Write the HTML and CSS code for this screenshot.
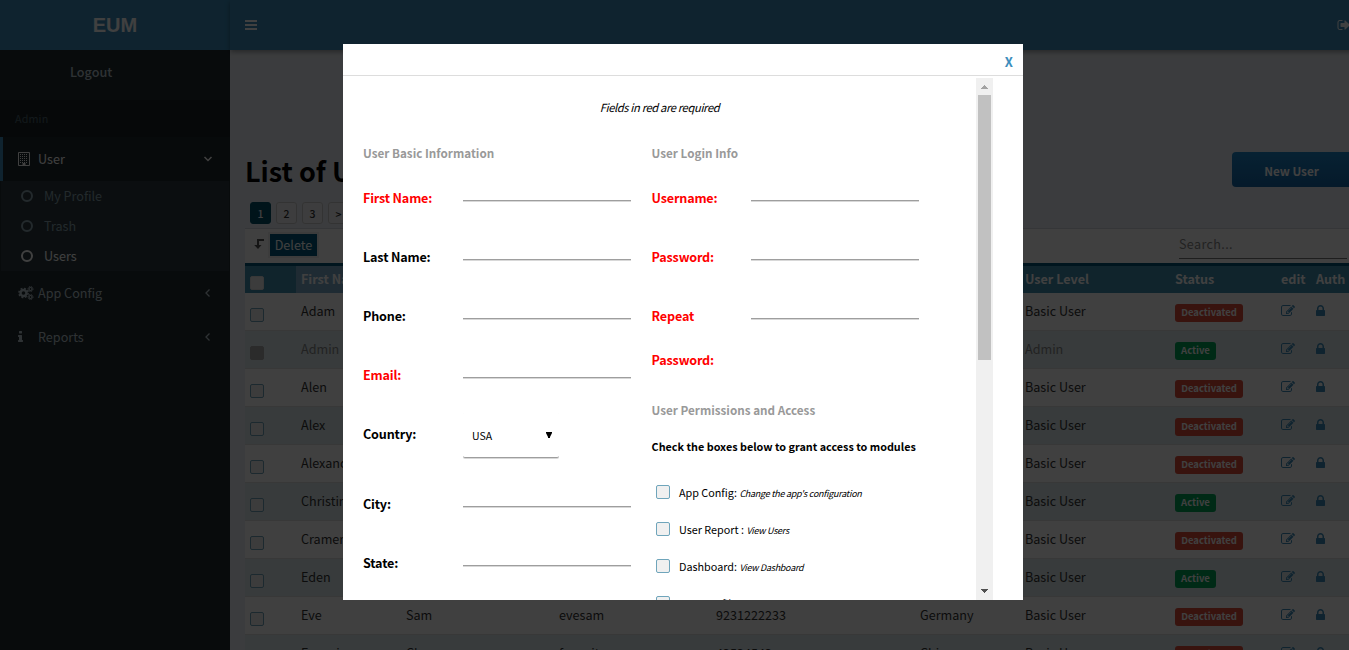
FILE: index.html
```html
<!DOCTYPE html>
<html lang="en">
<head>
<meta charset="utf-8">
<title>EUM</title>
<link rel="stylesheet" href="styles.css">
</head>
<body>
<svg class="defs" aria-hidden="true">
  <symbol id="lock" viewBox="0 0 1152 1792"><path d="M320 768h512v-192q0-106-75-181t-181-75-181 75-75 181v192zm832 96v576q0 40-28 68t-68 28h-960q-40 0-68-28t-28-68v-576q0-40 28-68t68-28h32v-192q0-184 132-316t316-132 316 132 132 316v192h32q40 0 68 28t28 68z"/></symbol>
  <symbol id="edit" viewBox="0 0 1792 1792"><path d="M888 1184l116-116-152-152-116 116v56h96v96h56zm440-720q-16-16-33 1l-350 350q-17 17-1 33t33-1l350-350q17-17 1-33zm80 594v190q0 119-84.500 203.500t-203.500 84.500h-832q-119 0-203.500-84.500t-84.500-203.500v-832q0-119 84.500-203.500t203.500-84.500h832q63 0 117 25 15 7 18 23 3 17-9 29l-49 49q-14 14-32 8-23-6-45-6h-832q-66 0-113 47t-47 113v832q0 66 47 113t113 47h832q66 0 113-47t47-113v-126q0-13 9-22l64-64q15-15 35-7t20 29zm-96-738l288 288-672 672h-288v-288zm444 132l-92 92-288-288 92-92q28-28 68-28t68 28l152 152q28 28 28 68t-28 68z"/></symbol>
</svg>
<div class="app">
  <aside class="sidebar">
    <div class="logo">EUM</div>
    <div class="user-panel">Logout</div>
    <div class="menu-title">Admin</div>
    <div class="menu-item active">
      <svg class="mi" viewBox="0 0 14 14"><path d="M1.500 .5h11v13h-11z" fill="none" stroke="currentColor"/><path d="M3 2.500h8M3 4.500h8M3 6.500h8M3 8.500h8M3 10.500h8" stroke="currentColor" stroke-dasharray="1 1"/><path d="M5.500 11h3v3h-3z"/></svg>
      <span>User</span>
      <svg class="arrow" viewBox="0 0 10 10"><path d="M1.500 3l3.500 3.500L8.500 3" fill="none" stroke="currentColor" stroke-width="1.500"/></svg>
    </div>
    <div class="tree">
      <div class="leaf"><i class="ring"></i>My Profile</div>
      <div class="leaf"><i class="ring"></i>Trash</div>
      <div class="leaf on"><i class="ring"></i>Users</div>
    </div>
    <div class="menu-item">
      <svg class="mi cogs" viewBox="0 0 16 14"><g fill="none" stroke="currentColor"><circle cx="5.500" cy="7" r="3" stroke-width="2.400"/><circle cx="5.500" cy="7" r="4.600" stroke-width="1.500" stroke-dasharray="1.900 1.713"/><circle cx="12.500" cy="3" r="1.500" stroke-width="1.200"/><circle cx="12.500" cy="3" r="2.500" stroke-dasharray="1.200 .76"/><circle cx="12.500" cy="11" r="1.500" stroke-width="1.200"/><circle cx="12.500" cy="11" r="2.500" stroke-dasharray="1.200 .76"/></g></svg>
      <span>App Config</span>
      <svg class="arrow" viewBox="0 0 10 10"><path d="M6.500 1.500L3 5l3.500 3.500" fill="none" stroke="currentColor" stroke-width="1.300"/></svg>
    </div>
    <div class="menu-item">
      <svg class="mi info" viewBox="0 0 640 1792"><path d="M640 1344v128q0 26-19 45t-45 19h-512q-26 0-45-19t-19-45v-128q0-26 19-45t45-19h64v-384h-64q-26 0-45-19t-19-45v-128q0-26 19-45t45-19h384q26 0 45 19t19 45v576h64q26 0 45 19t19 45zm-128-1152v192q0 26-19 45t-45 19h-256q-26 0-45-19t-19-45v-192q0-26 19-45t45-19h256q26 0 45 19t19 45z"/></svg>
      <span>Reports</span>
      <svg class="arrow" viewBox="0 0 10 10"><path d="M6.500 1.500L3 5l3.500 3.500" fill="none" stroke="currentColor" stroke-width="1.300"/></svg>
    </div>
  </aside>
  <main class="main">
    <header class="navbar">
      <svg class="bars" viewBox="0 0 12 10"><path d="M0 0h12v2H0zM0 4h12v2H0zM0 8h12v2H0z"/></svg>
      <svg class="signout" viewBox="0 0 1792 1792"><path d="M704 1440q0 4 1 20t.5 26.500-3 23.500-10 19.500-20.500 6.500h-320q-119 0-203.500-84.500t-84.500-203.500v-704q0-119 84.500-203.500t203.500-84.500h320q13 0 22.500 9.500t9.500 22.500q0 4 1 20t.5 26.500-3 23.500-10 19.500-20.500 6.500h-320q-66 0-113 47t-47 113v704q0 66 47 113t113 47h312l11.500 1 11.500 3 8 5.500 7 9 2 13.500zm928-544q0 26-19 45l-544 544q-19 19-45 19t-45-19-19-45v-288h-448q-26 0-45-19t-19-45v-384q0-26 19-45t45-19h448v-288q0-26 19-45t45-19 45 19l544 544q19 19 19 45z"/></svg>
    </header>
    <div class="title-row"><h1>List of Users</h1><button class="new-user">New User</button></div>
    <div class="pages"><b class="cur">1</b><b>2</b><b>3</b><b>&gt;</b></div>
    <section class="box">
      <div class="tools">
        <svg class="level" viewBox="0 0 10 10"><path d="M10 0v2H5v4h2.500L4 10 .2 6H3V0z"/></svg>
        <button class="delete">Delete</button>
        <div class="search">Search...</div>
      </div>
      <div class="grid head"><span><i class="check"></i></span><span class="sorted">First Name</span><span></span><span></span><span></span><span></span><span>User Level</span><span>Status</span><span>edit</span><span>Auth</span></div>
      <div id="rows"></div>
    </section>
  </main>
</div>
<div class="overlay"></div>
<div class="modal">
  <div class="modal-head"><span>X</span></div>
  <div class="modal-body">
    <div class="form">
      <p class="note">Fields in red are required</p>
      <div class="cols">
        <div class="col">
          <h4>User Basic Information</h4>
          <div class="field"><label class="req">First Name:</label><i class="line"></i></div>
          <div class="field"><label>Last Name:</label><i class="line"></i></div>
          <div class="field"><label>Phone:</label><i class="line"></i></div>
          <div class="field"><label class="req">Email:</label><i class="line"></i></div>
          <div class="field country"><label>Country:</label><div class="select"><span>USA</span><svg viewBox="0 0 6 6"><path d="M0 0h6v1L4 5v1H2V5L0 1z"/></svg></div></div>
          <div class="field"><label>City:</label><i class="line"></i></div>
          <div class="field"><label>State:</label><i class="line"></i></div>
        </div>
        <div class="col right">
          <h4>User Login Info</h4>
          <div class="field"><label class="req">Username:</label><i class="line"></i></div>
          <div class="field"><label class="req">Password:</label><i class="line"></i></div>
          <div class="field repeat"><label class="req">Repeat Password:</label><i class="line"></i></div>
          <h4 class="h-perm">User Permissions and Access</h4>
          <p class="hint">Check the boxes below to grant access to modules</p>
          <div class="perm"><i class="check"></i><span>App Config: <em>Change the app's configuration</em></span></div>
          <div class="perm"><i class="check"></i><span>User Report : <em>View Users</em></span></div>
          <div class="perm"><i class="check"></i><span>Dashboard: <em>View Dashboard</em></span></div>
          <div class="perm"><i class="check"></i><span>User Profile: <em>Edit Profile</em></span></div>
        </div>
      </div>
    </div>
    <div class="scrollbar">
      <svg viewBox="0 0 17 17"><path d="M5 11h7v-1h-1V9h-1V8H9V7H8v1H7v1H6v1H5z" fill="#a3a3a3"/></svg>
      <div class="thumb"></div>
      <svg viewBox="0 0 17 17"><path d="M5 6h7v1h-1v1h-1v1H9v1H8V9H7V8H6V7H5z" fill="#505050"/></svg>
    </div>
  </div>
</div>
<script src="rows.js"></script>
</body>
</html>
```
FILE: rows.js
```js
const users = [
  ['Adam', '', '', '', '', 'Basic User', 0],
  ['Admin', '', '', '', '', 'Admin', 1],
  ['Alen', '', '', '', '', 'Basic User', 0],
  ['Alex', '', '', '', '', 'Basic User', 0],
  ['Alexander', '', '', '', '', 'Basic User', 0],
  ['Christine', '', '', '', '', 'Basic User', 1],
  ['Cramer', '', '', '', '', 'Basic User', 0],
  ['Eden', '', '', '', '', 'Basic User', 1],
  ['Eve', 'Sam', 'evesam', '9231222233', 'Germany', 'Basic User', 0],
  ['Ferrari', 'Cha', 'ferrarit', '42524542', 'China', 'Basic User', 0]
];
document.getElementById('rows').innerHTML = users.map(u => {
  const cells = u.slice(0, 6).map(t => `<span>${t}</span>`).join('');
  const status = u[6] ? '<b class="tag ok">Active</b>' : '<b class="tag">Deactivated</b>';
  return `<div class="grid row${u[5] === 'Admin' ? ' locked' : ''}"><span><i class="check"></i></span>${cells}<span>${status}</span>` +
    '<span><svg class="e"><use href="#edit"/></svg></span><span><svg class="l"><use href="#lock"/></svg></span></div>';
}).join('');
```
FILE: styles.css
```css
* { box-sizing: border-box; }
body { margin: 0; width: 1349px; height: 650px; overflow: hidden; position: relative; font: 12.6px/20px "Noto Sans CJK SC", "Noto Sans", sans-serif; color: #333; background: #ecf0f5; }
svg { display: block; fill: currentColor; flex: none; }
.defs { position: absolute; width: 0; height: 0; }
h1, h4, p { margin: 0; }
button { font: inherit; border: 0; padding: 0; }
.app { display: flex; height: 650px; overflow: hidden; }

.sidebar { width: 230px; flex: none; background: #222d32; color: #b8c7ce; }
.logo { height: 50px; background: #3c8dbc; color: #fff; font: bold 20px/50px "Liberation Sans", Arial, sans-serif; text-align: center; }
.user-panel { height: 50px; padding-left: 70px; line-height: 44px; font-weight: 500; }
.menu-title { height: 37px; padding-left: 15px; background: #1a2226; color: #4b646f; font-size: 10.8px; line-height: 36px; letter-spacing: .1px; }
.menu-item { height: 44px; display: flex; align-items: center; padding: 0 17px 0 18px; }
.menu-item.active { background: #1e282c; color: #fff; border-left: 3px solid #3c8dbc; padding-left: 14px; }
.mi { width: 14px; height: 14px; margin-right: 7px; }
.cogs { width: 16px; margin-right: 4px; }
.info { width: 5px; margin-right: 15px; }
.menu-item.active .mi { margin-right: 7px; }
.arrow { width: 10px; height: 10px; margin-left: auto; }
.tree { background: #2c3b41; height: 90px; padding-left: 20px; margin: 0 1px; }
.leaf { height: 30px; display: flex; align-items: center; color: #8aa4af; gap: 11px; }
.leaf.on { color: #fff; }
.ring { width: 12px; height: 12px; border: 2px solid; border-radius: 50%; }

.main { width: 1139px; flex: none; }
.navbar { height: 50px; display: flex; align-items: center; padding-left: 15px; background: #3c8dbc; color: #fff; box-shadow: 0 2px 5px rgba(0,0,0,.35); }
.bars { width: 12px; height: 10px; }
.signout { width: 14px; height: 14px; margin-left: 1080px; }
.title-row { margin: 102px 0 0 15px; height: 49px; display: flex; justify-content: space-between; }
h1 { font-size: 27px; line-height: 38px; color: #000; font-weight: 700; }
.new-user { width: 137px; height: 35px; border-radius: 4px; background: linear-gradient(#1e86c8, #1567a8); color: #fff; font-size: 11.700px; font-weight: 700; line-height: 37px; padding-right: 18px; }
.pages { display: flex; gap: 5px; margin-left: 20px; height: 27px; padding-top: 1px; }
.pages b { width: 21px; height: 22px; border: 1px solid #ccc; border-radius: 3px; background: #f2f4f6; font-size: 10.500px; line-height: 21px; font-weight: 500; text-align: center; color: #333; }
.pages .cur { background: #00506a; border-color: #00506a; color: #fff; }
.box { margin-left: 15px; background: #fff; border-top: 1px solid #d2d6de; }
.tools { height: 34px; display: flex; align-items: center; padding-left: 9px; }
.level { width: 10px; height: 10px; color: #555; margin-top: -5px; }
.delete { width: 47px; height: 22px; margin: -3px 0 0 6px; background: #005a80; color: #fff; line-height: 19px; box-shadow: 0 0 0 2px #eee; }
.search { margin-left: 862px; width: 168px; height: 25px; color: #888; border-bottom: 1px solid #777; letter-spacing: .35px; line-height: 20px; }
.grid { display: grid; grid-template-columns: 51px 105px 153px 157px 204px 105px 150px 106px 35px 50px; height: 38px; }
.grid > span { padding-left: 5px; white-space: nowrap; }
.head { height: 30px; background: #4090b0; color: #fff; border-top: 3px solid #005478; line-height: 25px; font-weight: 700; }
.sorted { background: #7caccc; }
.row { border-bottom: 1px solid #ddd; line-height: 36px; }
.row:nth-child(even) { background: #deebee; }
.locked { color: #888; }
.check { display: block; width: 14px; height: 14px; border: 1px solid #6fa5bb; border-radius: 2px; background: #f0f0f0; flex: none; }
.row .check { margin-top: 15px; }
.head .check { margin-top: 10px; border-color: #ddd; }
.locked .check { background: #aaa; border-color: #aaa; }
.tag { display: block; width: 68px; height: 18px; margin-top: 11px; border-radius: 3px; background: #dd4b39; color: #fff; font-size: 9.500px; line-height: 17px; text-align: center; }
.tag.ok { width: 41px; background: #00a65a; }
.e { width: 14px; height: 14px; margin-top: 11px; color: #3c8dbc; }
.l { width: 9px; height: 14px; margin-top: 11px; color: #3c8dbc; }

.overlay { position: absolute; inset: 0; background: rgba(0,0,0,.75); }
.modal { position: absolute; left: 343px; top: 44px; width: 680px; height: 556px; background: #fff; overflow: hidden; color: #000; }
.modal-head { height: 32px; border-bottom: 1px solid #ddd; text-align: right; padding-right: 10px; color: #3c8dbc; font-weight: 700; line-height: 35px; font-size: 13px; }
.modal-body { display: flex; height: 522px; margin-top: 2px; width: 650px; }
.form { width: 633px; padding: 0 0 0 20px; overflow: hidden; }
.note { text-align: center; width: 593px; font-size: 11.200px; letter-spacing: -.37px; font-style: italic; line-height: 20px; padding-top: 19px; height: 65px; }
.cols { display: flex; }
.col { width: 288.600px; flex: none; }
h4 { font-size: 11.700px; line-height: 20px; height: 33px; color: #999; font-weight: 700; }
.field { display: flex; align-items: flex-start; height: 59px; }
.field label { width: 100px; line-height: 44px; font-weight: 700; letter-spacing: -.18px; flex: none; }
.right .field label { width: 99.400px; }
.req { color: #f00; }
.line { width: 168px; height: 26px; border-bottom: 1px solid #9e9e9e; box-shadow: 0 1px 0 #d8d8d8; flex: none; margin-top: -1px; }
.country { height: 70px; }
.select { width: 96px; height: 46px; border-bottom: 1px solid #9e9e9e; box-shadow: 0 1px 0 #d8d8d8; border-radius: 2px; display: flex; justify-content: space-between; padding: 0 7px 0 9px; line-height: 47px; font-size: 10.500px; }
.select svg { width: 6px; height: 6px; margin-top: 20px; }
.repeat { height: 93px; }
.repeat label { padding-right: 20px; }
.h-perm { height: 36px; margin-top: 13px; }
.hint { font-size: 10.800px; font-weight: 700; line-height: 20px; height: 49px; white-space: nowrap; }
.perm { display: flex; height: 37px; padding-left: 4px; gap: 9.400px; line-height: 15px; font-size: 10.800px; white-space: nowrap; }
.perm em { font-size: 9px; letter-spacing: -.27px; }
.scrollbar { width: 17px; height: 522px; background: #f0f0f0; display: flex; flex-direction: column; }
.scrollbar svg { width: 17px; height: 17px; }
.thumb { width: 13px; height: 265px; margin: 0 2px auto; background: #c1c1c1; }
```
